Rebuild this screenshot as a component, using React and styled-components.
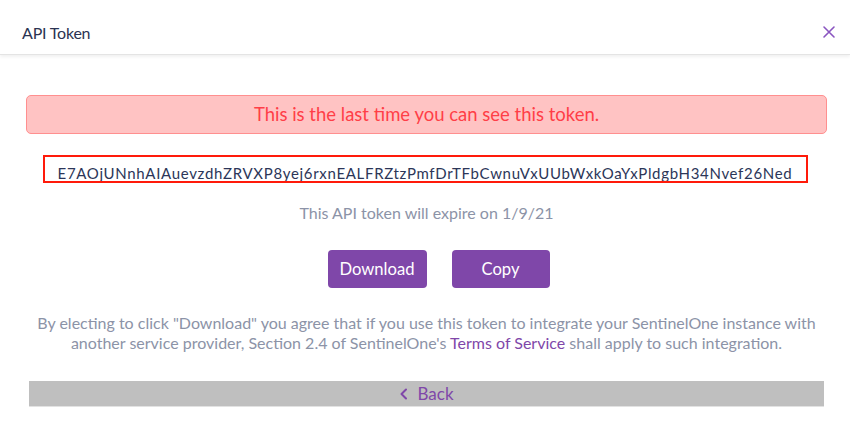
import React from "react";
import styled, { createGlobalStyle } from "styled-components";

const Global = createGlobalStyle`
  html, body { margin: 0; padding: 0; background: #fff; }
  body { font-family: Lato, "Open Sans", sans-serif; }
`;

const Modal = styled.div`
  width: 850px;
  height: 425px;
  background: #fff;
  display: flex;
  flex-direction: column;
`;

const Header = styled.div`
  height: 55px;
  box-sizing: border-box;
  display: flex;
  align-items: center;
  justify-content: space-between;
  padding: 10px 14px 0 22px;
  border-bottom: 1px solid #e4e4e4;
  box-shadow: 0 2px 3px rgba(0, 0, 0, 0.06);
`;

const Title = styled.div`
  font-size: 16px;
  color: #2b3352;
  letter-spacing: -0.2px;
`;

const Close = styled.button`
  border: 0;
  background: none;
  padding: 0;
  width: 14px;
  height: 14px;
  display: flex;
  cursor: pointer;
`;

const Body = styled.div`
  display: flex;
  flex-direction: column;
  align-items: center;
  padding: 40px 23px 0 26px;
`;

const Alert = styled.div`
  align-self: stretch;
  height: 39px;
  box-sizing: border-box;
  background: #ffc3c3;
  border: 1px solid #ff8f8f;
  border-radius: 5px;
  display: flex;
  align-items: center;
  justify-content: center;
  color: #ff3e47;
  font-size: 18.5px;
  padding-bottom: 1px;
`;

const TokenBox = styled.div`
  margin-top: 21px;
  width: 765px;
  height: 28px;
  box-sizing: border-box;
  border: 2px solid #ff1a0a;
  overflow: hidden;
  display: flex;
  justify-content: center;
  align-items: flex-start;
  padding-top: 4px;
  margin-left: -3px;
`;

const TokenText = styled.span`
  font-size: 15px;
  line-height: 24px;
  color: #2c3658;
  white-space: nowrap;
  letter-spacing: 0.68px;
`;

const Expire = styled.div`
  margin-top: 20px;
  font-size: 16px;
  color: #8c93a7;
`;

const Buttons = styled.div`
  margin-top: 28px;
  display: flex;
  gap: 25px;
  margin-left: 24px;
`;

const Button = styled.button`
  width: ${(p) => p.$w}px;
  height: 38px;
  border: 0;
  border-radius: 4px;
  background: #7f47a9;
  color: #fff;
  font-family: Lato, sans-serif;
  font-size: 16.6px;
  cursor: pointer;
`;

const Legal = styled.p`
  margin: 25px 0 0 0;
  text-align: center;
  font-size: 16px;
  line-height: 20px;
  color: #8c93a7;
`;

const Link = styled.a`
  color: #7f47a9;
  text-decoration: none;
`;

const BackBar = styled.div`
  align-self: stretch;
  margin: 28px 3px 0 3px;
  height: 25px;
  background: #bfbfbf;
  border-bottom: 1px solid #e2e2e2;
  display: flex;
  align-items: center;
  justify-content: center;
  color: #7f47a9;
  font-size: 17px;
  gap: 8px;
`;

export default function App() {
  return (
    <>
      <Global />
      <Modal>
        <Header>
          <Title>API Token</Title>
          <Close aria-label="close">
            <svg width="14" height="14" viewBox="0 0 14 14">
              <path d="M2 2 L12 12 M12 2 L2 12" stroke="#8a55c0" strokeWidth="1.6" strokeLinecap="round" />
            </svg>
          </Close>
        </Header>
        <Body>
          <Alert>This is the last time you can see this token.</Alert>
          <TokenBox>
            <TokenText>E7AOjUNnhAIAuevzdhZRVXP8yej6rxnEALFRZtzPmfDrTFbCwnuVxUUbWxkOaYxPldgbH34Nvef26Ned</TokenText>
          </TokenBox>
          <Expire>This API token will expire on 1/9/21</Expire>
          <Buttons>
            <Button $w={99}>Download</Button>
            <Button $w={98}>Copy</Button>
          </Buttons>
          <Legal>
            By electing to click "Download" you agree that if you use this token to integrate your SentinelOne instance with
            <br />
            another service provider, Section 2.4 of SentinelOne's <Link href="#">Terms of Service</Link> shall apply to such integration.
          </Legal>
          <BackBar>
            <svg width="10" height="12" viewBox="0 0 10 12">
              <path d="M7 1.5 L2.5 6 L7 10.5" fill="none" stroke="#7f47a9" strokeWidth="2" strokeLinecap="round" strokeLinejoin="round" />
            </svg>
            <span>Back</span>
          </BackBar>
        </Body>
      </Modal>
    </>
  );
}
